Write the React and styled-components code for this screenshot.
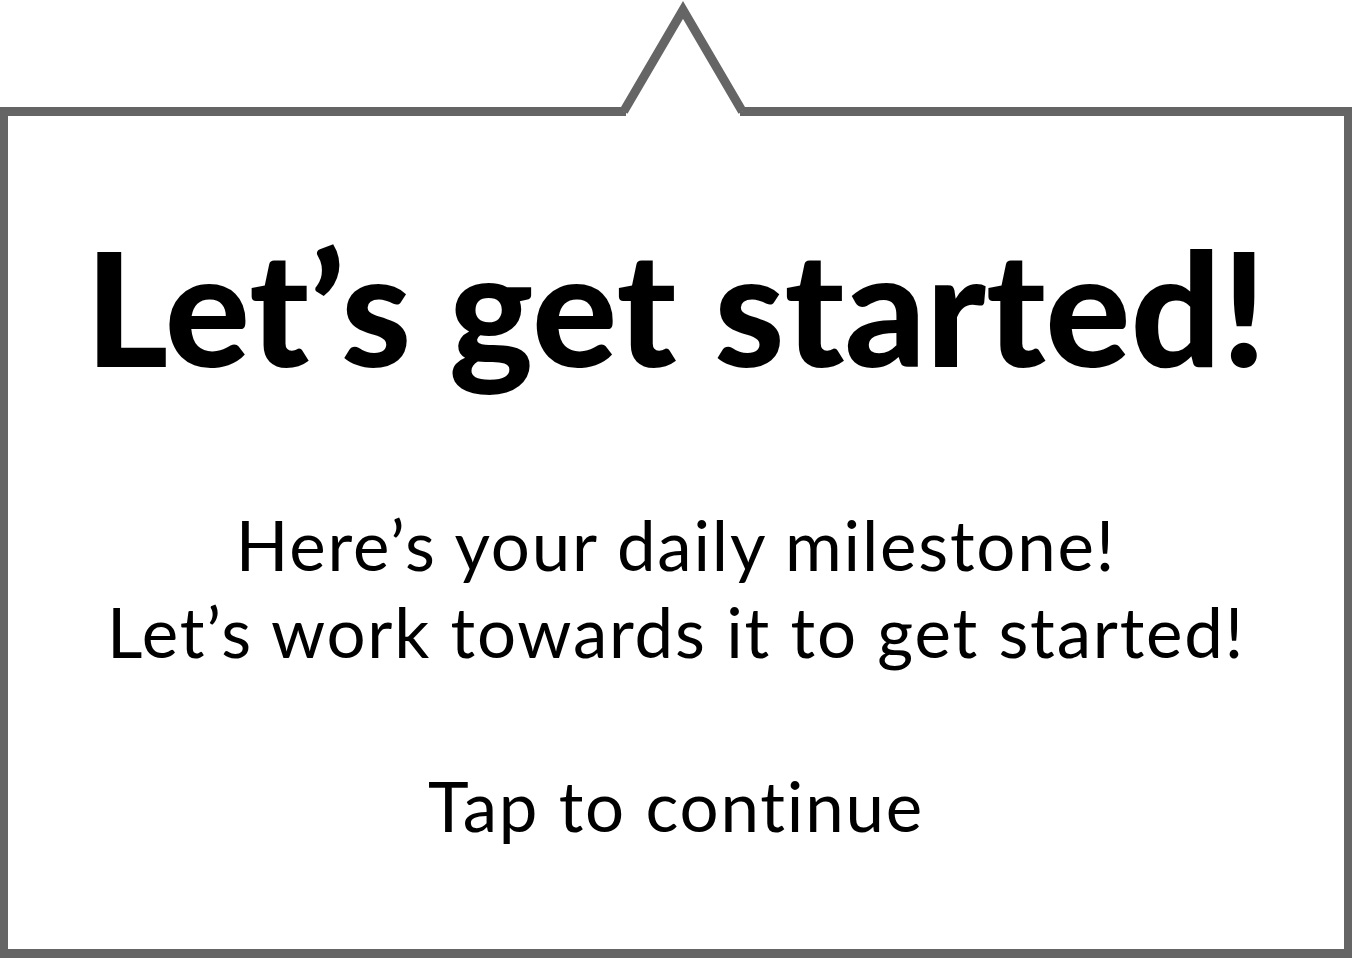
import React from "react";
import styled, { createGlobalStyle } from "styled-components";

const Global = createGlobalStyle`
  html, body { margin: 0; padding: 0; background: #ffffff; }
  body { font-family: Lato, "Noto Sans", sans-serif; color: #000; }
`;

const Stage = styled.div`
  position: relative;
  width: 1354px;
  height: 958px;
  padding-top: 107px;
  box-sizing: border-box;
  overflow: hidden;
`;

const Bubble = styled.section`
  box-sizing: border-box;
  width: 1352px;
  height: 851px;
  border: 9px solid #656565;
  border-left-width: 8px;
  border-right-width: 8px;
  display: flex;
  flex-direction: column;
  align-items: center;
  padding-top: 110px;
  background: #fff;
`;

const Pointer = styled.svg`
  position: absolute;
  top: 0;
  left: 600px;
  width: 170px;
  height: 120px;
  overflow: visible;
`;

const Title = styled.h1`
  margin: 0;
  font-family: Lato, "Noto Sans", sans-serif;
  font-weight: 900;
  font-size: 159px;
  line-height: 1;
  white-space: nowrap;
  text-align: center;
  font-variant-ligatures: none;
`;

const Message = styled.p`
  margin: ${(p) => p.$gap}px 0 0;
  font-family: Lato, "Noto Sans", sans-serif;
  font-weight: 400;
  font-size: 69px;
  letter-spacing: 1.8px;
  line-height: 87px;
  text-align: center;
  white-space: nowrap;
  font-variant-ligatures: none;
`;

export default function App() {
  return (
    <>
      <Global />
      <Stage>
        <Bubble>
          <Title>Let’s get started!</Title>
          <Message $gap={116}>
            Here’s your daily milestone!
            <br />
            Let’s work towards it to get started!
          </Message>
          <Message $gap={87}>Tap to continue</Message>
        </Bubble>
        <Pointer viewBox="600 0 170 120">
          <rect x="626" y="105" width="114" height="13" fill="#fff" />
          <polyline
            points="623.6,111.5 683,10 742.4,111.5"
            fill="#fff"
            stroke="#656565"
            strokeWidth="9"
            strokeLinejoin="miter"
            strokeMiterlimit="10"
          />
        </Pointer>
      </Stage>
    </>
  );
}
